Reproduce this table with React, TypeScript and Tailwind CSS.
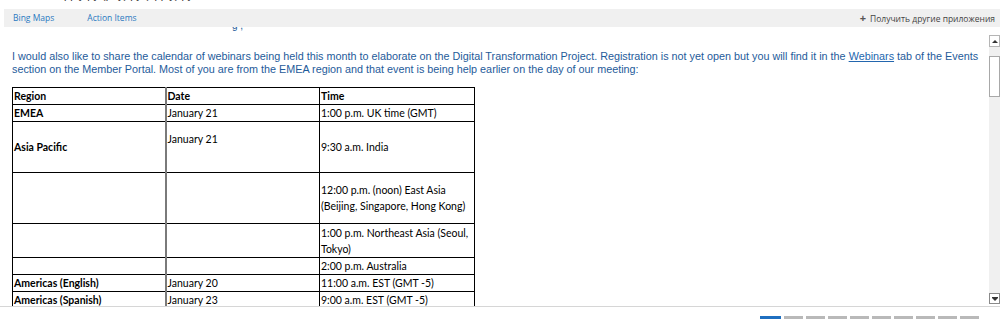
const rows = [
  { region: 'EMEA', date: 'January 21', time: ['1:00 p.m. UK time (GMT)'], h: 'h-[17px]' },
  { region: 'Asia Pacific', date: 'January 21', dateBlank: true, time: ['9:30 a.m. India'], h: 'h-[51px]' },
  { region: '', date: '', time: ['12:00 p.m. (noon) East Asia', '(Beijing, Singapore, Hong Kong)'], h: 'h-[51px]' },
  { region: '', date: '', time: ['1:00 p.m. Northeast Asia (Seoul,', 'Tokyo)'], h: 'h-[34px]' },
  { region: '', date: '', time: ['2:00 p.m. Australia'], h: 'h-[16px]' },
  { region: 'Americas (English)', date: 'January 20', time: ['11:00 a.m. EST (GMT -5)'], h: 'h-[16px]' },
  { region: 'Americas (Spanish)', date: 'January 23', time: ['9:00 a.m. EST (GMT -5)'], h: 'h-[16px]' },
];

function Scrollbar() {
  return (
    <div className="w-[11px] mt-[8px] mb-[2px] flex flex-col">
      <div className="h-[12px] border border-[#b5b5b5] bg-white flex items-center justify-center">
        <div className="w-0 h-0 border-l-[3px] border-r-[3px] border-b-[3px] border-l-transparent border-r-transparent border-b-[#333]" />
      </div>
      <div className="flex-1 bg-[#f0f0f0] pt-[9px]">
        <div className="h-[41px] border border-[#a8a8a8] bg-white" />
      </div>
      <div className="h-[11px] border border-[#8a8a8a] bg-white flex flex-col items-center justify-center">
        <div className="w-[6px] h-px bg-[#333]" />
        <div className="w-0 h-0 border-l-[3px] border-r-[3px] border-t-[3px] border-l-transparent border-r-transparent border-t-[#333]" />
      </div>
    </div>
  );
}

export default function App() {
  const tabs = [0, 1, 2, 3, 4, 5, 6, 7, 8, 9];
  return (
    <div className="w-[1000px] h-[319px] bg-white overflow-hidden flex flex-col">
      {/* clipped line above the app bar */}
      <div className="h-[9px] overflow-hidden">
        <div className="ml-[58px] mt-[-11px] text-[11px] leading-[12px] text-[#333] font-['Liberation_Sans',sans-serif] whitespace-nowrap">
          apply py (pay) py (apply) py
        </div>
      </div>

      {/* app bar */}
      <div className="ml-[4px] h-[18px] bg-[#f0f0f0] flex items-center text-[8.5px] font-['Open_Sans',sans-serif] whitespace-nowrap">
        <span className="ml-[9px] text-[#2a78c0]">Bing Maps</span>
        <span className="ml-[33px] text-[#2a78c0]">Action Items</span>
        <span className="ml-auto mr-[5px] text-[#444]">
          <span className="text-[11px] font-bold mr-[4px] text-[#555]">+</span>Получить другие приложения
        </span>
      </div>

      <div className="flex h-[279px]">
        <div className="flex-1 overflow-hidden">
          <div className="h-[7px] overflow-hidden">
            <div className="ml-[232px] mt-[-6px] text-[10px] leading-[10px] text-[#1e5b9a] font-['Liberation_Sans',sans-serif]">
              g ,
            </div>
          </div>
          <div className="mt-[16px] ml-[12px] text-[10.8px] leading-[13px] text-[#1e5b9a] font-['Liberation_Sans',sans-serif] whitespace-nowrap">
            <div>
              I would also like to share the calendar of webinars being held this month to elaborate on the Digital Transformation Project. Registration is not yet open but you will find it in the{' '}
              <span className="underline text-[#2366ae]">Webinars</span> tab of the Events
            </div>
            <div>section on the Member Portal. Most of you are from the EMEA region and that event is being help earlier on the day of our meeting:</div>
          </div>

          <table className="mt-[11px] ml-[12px] table-fixed border-collapse w-[462px] text-[10.5px] leading-[16px] text-black font-['Lato',sans-serif]">
            <colgroup>
              <col className="w-[153px]" />
              <col className="w-[154px]" />
              <col className="w-[155px]" />
            </colgroup>
            <tbody>
              <tr className="h-[16px] font-bold">
                <td className="border border-black pl-[1px] p-0 align-middle">Region</td>
                <td className="border border-black border-l-2 border-l-[#7a7a7a] pl-[1px] p-0 align-middle">Date</td>
                <td className="border border-black pl-[1px] p-0 align-middle">Time</td>
              </tr>
              {rows.map((r, i) => (
                <tr key={i} className={r.h}>
                  <td className="border border-black pl-[1px] p-0 align-middle font-bold">{r.region}</td>
                  <td className="border border-black border-l-2 border-l-[#7a7a7a] pl-[1px] p-0 align-middle">
                    {r.date}
                    {r.dateBlank && (
                      <>
                        <br />
                        &nbsp;
                      </>
                    )}
                  </td>
                  <td className="border border-black pl-[1px] p-0 align-middle">
                    {r.time.map((t, j) => (
                      <div key={j} className="whitespace-nowrap">{t}</div>
                    ))}
                  </td>
                </tr>
              ))}
            </tbody>
          </table>
        </div>
        <Scrollbar />
      </div>

      <div className="h-px bg-[#d6d6d6]" />
      <div className="mt-[9px] ml-[760px] flex gap-[3px]">
        {tabs.map((t) => (
          <div
            key={t}
            className={t === 0 ? 'w-[21px] h-[3px] bg-[#1f6fc0]' : 'w-[19px] h-[3px] bg-[#b9b9b9]'}
          />
        ))}
      </div>
    </div>
  );
}
